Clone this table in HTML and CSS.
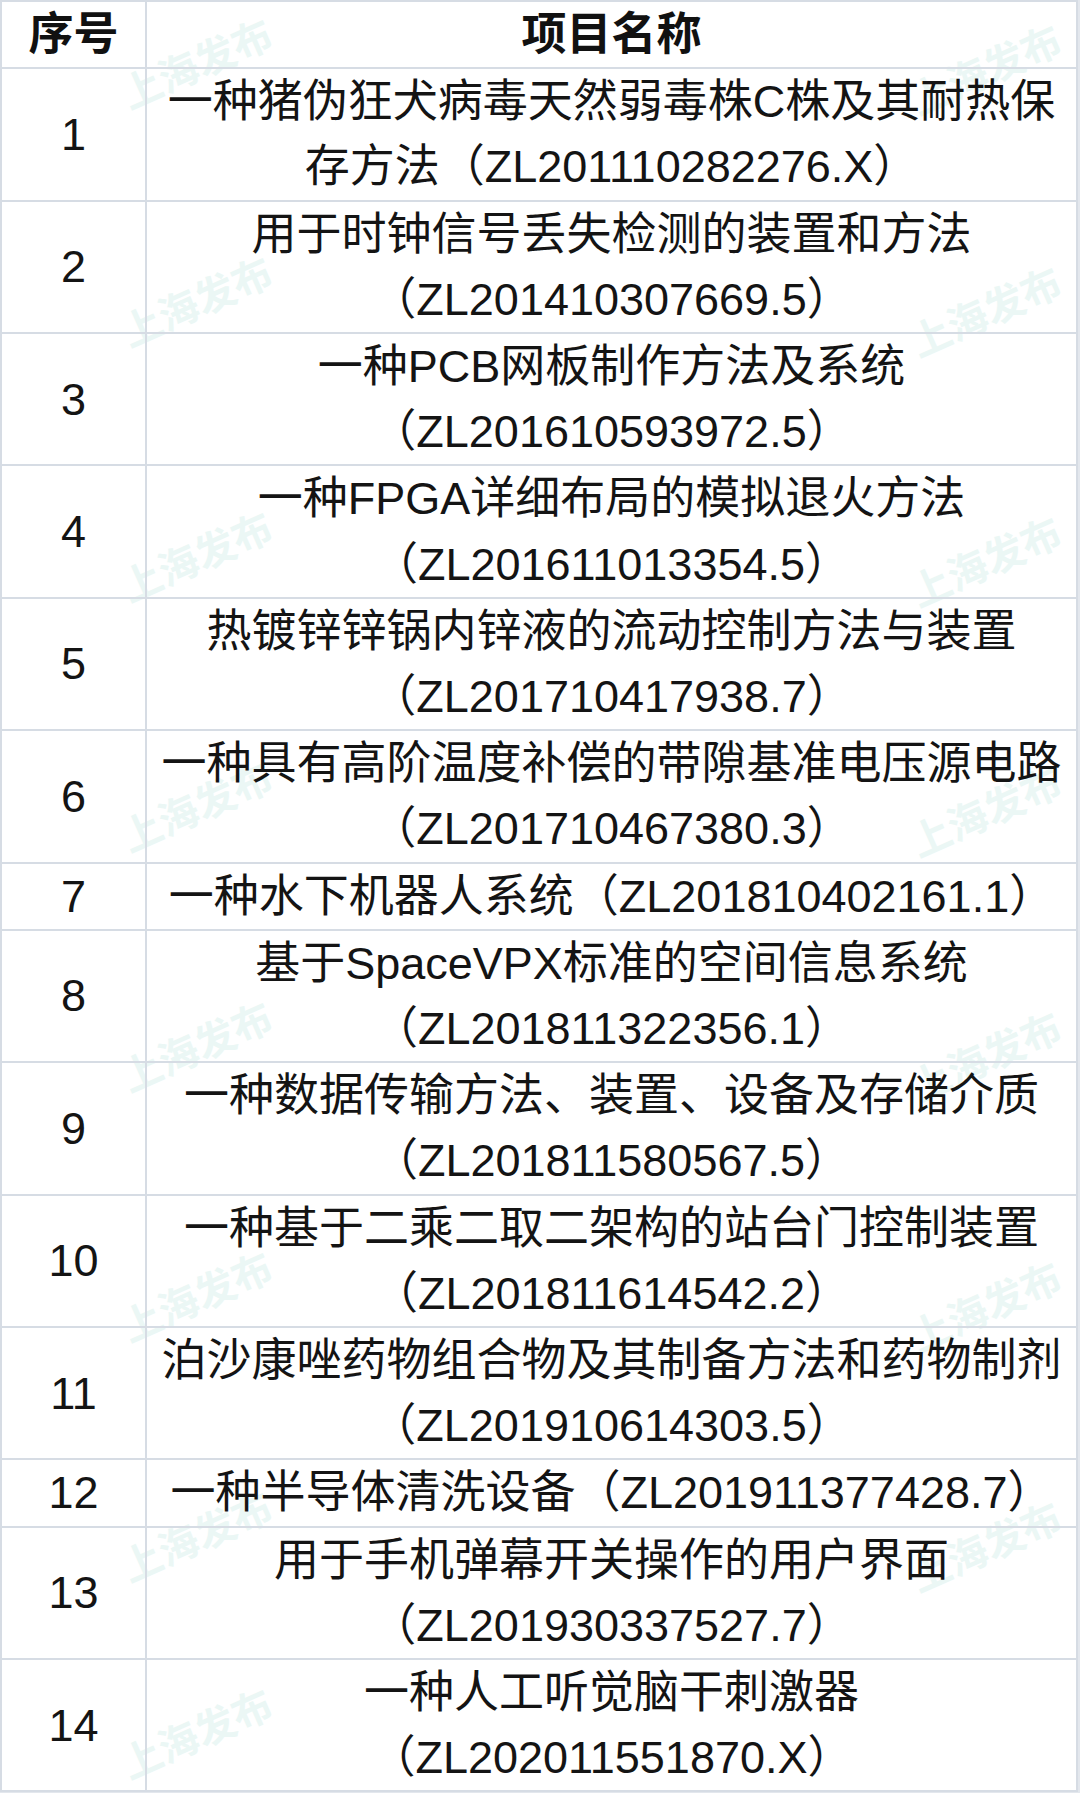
FILE: index.html
```html
<!DOCTYPE html>
<html lang="zh-CN">
<head>
<meta charset="utf-8">
<title>专利项目列表</title>
<link rel="stylesheet" href="styles.css">
</head>
<body>
<div class="sheet">
  <div class="watermarks" aria-hidden="true">
    <span class="wm wm-l1">上海发布</span>
    <span class="wm wm-l2">上海发布</span>
    <span class="wm wm-l3">上海发布</span>
    <span class="wm wm-l4">上海发布</span>
    <span class="wm wm-l5">上海发布</span>
    <span class="wm wm-l6">上海发布</span>
    <span class="wm wm-l7">上海发布</span>
    <span class="wm wm-l8">上海发布</span>
    <span class="wm wm-r1">上海发布</span>
    <span class="wm wm-r2">上海发布</span>
    <span class="wm wm-r3">上海发布</span>
    <span class="wm wm-r4">上海发布</span>
    <span class="wm wm-r5">上海发布</span>
    <span class="wm wm-r6">上海发布</span>
    <span class="wm wm-r7">上海发布</span>
  </div>
  <table class="patents">
    <thead>
      <tr><th class="no">序号</th><th class="name">项目名称</th></tr>
    </thead>
    <tbody>
      <tr><td class="no">1</td><td class="name">一种猪伪狂犬病毒天然弱毒株C株及其耐热保<br>存方法（ZL201110282276.X）</td></tr>
      <tr><td class="no">2</td><td class="name">用于时钟信号丢失检测的装置和方法<br>（ZL201410307669.5）</td></tr>
      <tr><td class="no">3</td><td class="name">一种PCB网板制作方法及系统<br>（ZL201610593972.5）</td></tr>
      <tr><td class="no">4</td><td class="name">一种FPGA详细布局的模拟退火方法<br>（ZL201611013354.5）</td></tr>
      <tr><td class="no">5</td><td class="name">热镀锌锌锅内锌液的流动控制方法与装置<br>（ZL201710417938.7）</td></tr>
      <tr><td class="no">6</td><td class="name">一种具有高阶温度补偿的带隙基准电压源电路<br>（ZL201710467380.3）</td></tr>
      <tr><td class="no">7</td><td class="name">一种水下机器人系统（ZL201810402161.1）</td></tr>
      <tr><td class="no">8</td><td class="name">基于SpaceVPX标准的空间信息系统<br>（ZL201811322356.1）</td></tr>
      <tr><td class="no">9</td><td class="name">一种数据传输方法、装置、设备及存储介质<br>（ZL201811580567.5）</td></tr>
      <tr><td class="no">10</td><td class="name">一种基于二乘二取二架构的站台门控制装置<br>（ZL201811614542.2）</td></tr>
      <tr><td class="no">11</td><td class="name">泊沙康唑药物组合物及其制备方法和药物制剂<br>（ZL201910614303.5）</td></tr>
      <tr><td class="no">12</td><td class="name">一种半导体清洗设备（ZL201911377428.7）</td></tr>
      <tr><td class="no">13</td><td class="name">用于手机弹幕开关操作的用户界面<br>（ZL201930337527.7）</td></tr>
      <tr><td class="no">14</td><td class="name">一种人工听觉脑干刺激器<br>（ZL202011551870.X）</td></tr>
    </tbody>
  </table>
</div>
</body>
</html>
```
FILE: styles.css
```css
html, body {
  margin: 0;
  padding: 0;
}

body {
  background: #e3e7ed;
  width: 1080px;
  height: 1793px;
  overflow: hidden;
}

.sheet {
  position: relative;
  width: 1078px;
  background: #ffffff;
}

.patents {
  position: relative;
  z-index: 1;
  width: 1078px;
  border-collapse: collapse;
  table-layout: fixed;
  background: transparent;
  font-family: "Liberation Sans", "Noto Sans CJK SC", sans-serif;
  font-size: 45px;
  color: #141414;
}

.patents th,
.patents td {
  border: 2px solid #d6dce4;
  padding: 0;
  line-height: 65.2px;
  text-align: center;
  vertical-align: middle;
  white-space: nowrap;
}

.patents th {
  font-weight: 700;
  color: #111111;
}

.patents .no {
  width: 143px;
}

.watermarks {
  position: absolute;
  inset: 0;
  z-index: 0;
  overflow: hidden;
  pointer-events: none;
}

.wm {
  position: absolute;
  font-family: "Noto Sans CJK SC", sans-serif;
  font-weight: 700;
  font-size: 40px;
  line-height: 1;
  color: #ebf7f5;
  transform: rotate(-24deg);
  white-space: nowrap;
}

.wm-l1 { left: 116px; top: 42px; }
.wm-l2 { left: 116px; top: 280px; }
.wm-l3 { left: 116px; top: 535px; }
.wm-l4 { left: 116px; top: 785px; }
.wm-l5 { left: 116px; top: 1025px; }
.wm-l6 { left: 116px; top: 1275px; }
.wm-l7 { left: 116px; top: 1515px; }
.wm-l8 { left: 116px; top: 1712px; }

.wm-r1 { left: 905px; top: 48px; }
.wm-r2 { left: 905px; top: 290px; }
.wm-r3 { left: 905px; top: 540px; }
.wm-r4 { left: 905px; top: 790px; }
.wm-r5 { left: 905px; top: 1035px; }
.wm-r6 { left: 905px; top: 1285px; }
.wm-r7 { left: 905px; top: 1525px; }
```
